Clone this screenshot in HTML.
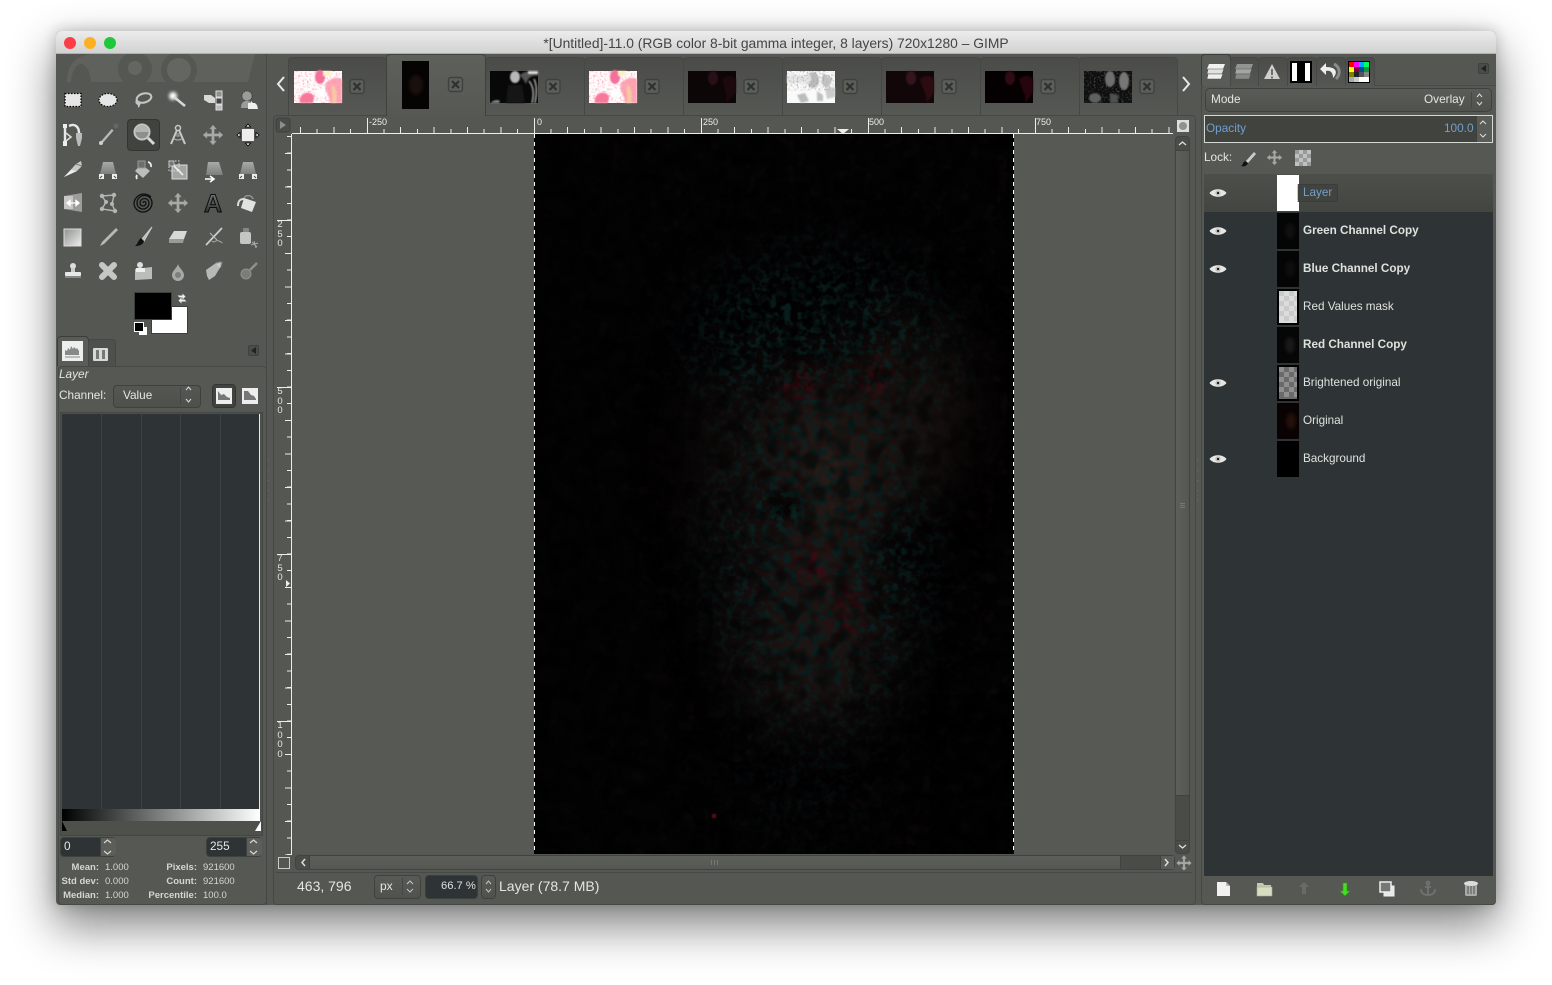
<!DOCTYPE html>
<html><head><meta charset="utf-8"><title>GIMP</title>
<style>
html,body{margin:0;padding:0;background:#fff;width:1552px;height:985px;overflow:hidden}
body{font-family:"Liberation Sans",sans-serif;color:#e4e6e1;position:relative}
.a{position:absolute;white-space:nowrap}
.t{position:absolute;white-space:nowrap;font-size:11.8px;line-height:14px}
.tab{position:absolute;top:57px;height:58px;box-sizing:border-box;border:1px solid #464845;border-bottom:0;border-radius:4px 4px 0 0;background:linear-gradient(#4b4c49,#565854)}
.rtab{position:absolute;top:57px;height:29px;box-sizing:border-box;border:1px solid #464845;border-bottom:0;border-radius:4px 4px 0 0;background:linear-gradient(#4b4c49,#555753)}
.btn{position:absolute;box-sizing:border-box;border:1px solid #3f413e;border-radius:4px;background:linear-gradient(#5f615d,#4f514d)}
.lb{position:absolute;font-size:11.7px;line-height:14px;left:1303px;color:#dfe1dc;white-space:nowrap}
.r{position:absolute;font-size:9.5px;font-weight:bold;line-height:11px;text-align:right;width:60px;color:#d3d7cf;white-space:nowrap}
.v{position:absolute;font-size:9.5px;line-height:11px;color:#d3d7cf;white-space:nowrap}
.rl{position:absolute;font-size:9px;line-height:10px;color:#eceeea;white-space:nowrap}
.vl{position:absolute;left:276px;width:8px;text-align:center;font-size:9.5px;line-height:9.5px;color:#e3e5e1;white-space:normal}
</style></head><body>

<div class="a" style="left:56px;top:31px;width:1440px;height:874px;border-radius:5px 5px 4px 4px;background:#555753;box-shadow:0 20px 46px 2px rgba(0,0,0,.48),0 0 14px rgba(0,0,0,.22)"></div>
<div class="a" style="left:56px;top:31px;width:1440px;height:23px;border-radius:5px 5px 0 0;background:linear-gradient(#ececec,#d2d2d2);border-bottom:1px solid #b0b0b0;box-sizing:border-box"></div>
<div class="a" style="left:56px;width:1440px;top:36px;text-align:center;font-size:13.85px;line-height:15px;color:#444">*[Untitled]-11.0 (RGB color 8-bit gamma integer, 8 layers) 720x1280 – GIMP</div>
<div class="a" style="left:64px;top:37px;width:12px;height:12px;border-radius:6px;background:#fc3d47"></div>
<div class="a" style="left:84px;top:37px;width:12px;height:12px;border-radius:6px;background:#fdb024"></div>
<div class="a" style="left:104px;top:37px;width:12px;height:12px;border-radius:6px;background:#1fc83a"></div>

<!-- toolbox -->
<div class="a" style="left:56px;top:54px;width:211px;height:851px;border-right:1px solid #474946;box-sizing:border-box"></div>
<div class="a" style="left:127px;top:119px;width:33px;height:32px;box-sizing:border-box;border:1px solid #333532;border-radius:4px;background:#41433f"></div>

<div class="a" style="left:151px;top:306px;width:37px;height:28px;background:#fff;box-sizing:border-box;border:1px solid #3c3e3b"></div>
<div class="a" style="left:134px;top:292px;width:38px;height:28px;background:#000;box-sizing:border-box;border:1px solid #3c3e3b"></div>
<div class="a" style="left:139px;top:327px;width:8px;height:8px;background:#fff"></div>
<div class="a" style="left:134px;top:322px;width:8px;height:8px;background:#000;border:1px solid #fff"></div>

<!-- histogram dock -->
<div class="a" style="left:57px;top:336px;width:32px;height:30px;box-sizing:border-box;border:1px solid #3c3e3b;border-bottom:0;border-radius:4px 4px 0 0;background:#5a5c58"></div>
<div class="a" style="left:88px;top:339px;width:28px;height:27px;box-sizing:border-box;border:1px solid #464845;border-bottom:0;border-radius:4px 4px 0 0;background:#4e504c"></div>
<div class="a" style="left:58px;top:366px;width:209px;height:539px;box-sizing:border-box;border:1px solid #464845;border-radius:4px;background:#565854"></div>
<div class="btn" style="left:248px;top:345px;width:11px;height:11px;border-radius:2px;background:#4a4c48"></div>
<div class="t" style="left:59px;top:367px;font-style:italic;color:#e4e6e1">Layer</div>
<div class="t" style="left:59px;top:388px;color:#e4e6e1">Channel:</div>
<div class="btn" style="left:113px;top:385px;width:88px;height:23px;background:linear-gradient(#555753,#4e504c)"></div>
<div class="t" style="left:123px;top:388px;color:#e4e6e1">Value</div>
<div class="a" style="left:180px;top:388px;width:1px;height:17px;background:#444643"></div>
<div class="btn" style="left:212px;top:384px;width:24px;height:24px;border-color:#333532;background:#41433f"></div>
<div class="a" style="left:60px;top:412px;width:203px;height:424px;box-sizing:border-box;border:1px solid #444643;background:#4e504c"></div>
<div class="a" style="left:62px;top:414px;width:198px;height:395px;background:#2e3436"></div>
<div class="a" style="left:101px;top:414px;width:1px;height:395px;background:#3c4244"></div>
<div class="a" style="left:141px;top:414px;width:1px;height:395px;background:#3c4244"></div>
<div class="a" style="left:180px;top:414px;width:1px;height:395px;background:#3c4244"></div>
<div class="a" style="left:220px;top:414px;width:1px;height:395px;background:#3c4244"></div>
<div class="a" style="left:259px;top:414px;width:1px;height:395px;background:#e8e8e8"></div>
<div class="a" style="left:62px;top:809px;width:198px;height:12px;background:linear-gradient(90deg,#000,#fff)"></div>

<div class="btn" style="left:60px;top:837px;width:56px;height:20px;background:#2e3436"></div>
<div class="a" style="left:100px;top:838px;width:15px;height:18px;background:#5c5e5a;border-left:1px solid #3f413e;border-radius:0 3px 3px 0"></div>
<div class="t" style="left:64px;top:839px;color:#e4e6e1">0</div>
<div class="btn" style="left:206px;top:837px;width:56px;height:20px;background:#2e3436"></div>
<div class="a" style="left:246px;top:838px;width:15px;height:18px;background:#5c5e5a;border-left:1px solid #3f413e;border-radius:0 3px 3px 0"></div>
<div class="t" style="left:210px;top:839px;color:#e4e6e1">255</div>

<div class="r" style="left:39px;top:862px">Mean:</div><div class="v" style="left:105px;top:862px">1.000</div>
<div class="r" style="left:39px;top:876px">Std dev:</div><div class="v" style="left:105px;top:876px">0.000</div>
<div class="r" style="left:39px;top:890px">Median:</div><div class="v" style="left:105px;top:890px">1.000</div>
<div class="r" style="left:137px;top:862px">Pixels:</div><div class="v" style="left:203px;top:862px">921600</div>
<div class="r" style="left:137px;top:876px">Count:</div><div class="v" style="left:203px;top:876px">921600</div>
<div class="r" style="left:137px;top:890px">Percentile:</div><div class="v" style="left:203px;top:890px">100.0</div>

<!-- center tabs -->
<div class="tab" style="left:288px;width:99px"></div>
<div class="tab" style="left:485px;width:100px"></div>
<div class="tab" style="left:584px;width:100px"></div>
<div class="tab" style="left:683px;width:100px"></div>
<div class="tab" style="left:782px;width:100px"></div>
<div class="tab" style="left:881px;width:100px"></div>
<div class="tab" style="left:980px;width:100px"></div>
<div class="tab" style="left:1079px;width:99px"></div>
<div class="a" style="left:273px;top:115px;width:923px;height:790px;box-sizing:border-box;border:1px solid #464845;border-radius:4px;background:#555753"></div>
<div class="tab" style="left:386px;top:54px;width:100px;height:62px;border-color:#3f413d;background:linear-gradient(#5e605c,#565854);border-bottom:0"></div>

<!-- canvas -->
<div class="a" style="left:292px;top:134px;width:882px;height:720px;background:#575955"></div>
<svg class="a" style="left:534px;top:134px" width="480" height="720" viewBox="0 0 480 720">
<defs>
<filter id="blur30" color-interpolation-filters="sRGB" x="-60%" y="-60%" width="220%" height="220%"><feGaussianBlur stdDeviation="30"/></filter>
<filter id="blur14" color-interpolation-filters="sRGB" x="-60%" y="-60%" width="220%" height="220%"><feGaussianBlur stdDeviation="10"/></filter>
<filter id="nT" color-interpolation-filters="sRGB" x="0" y="0" width="100%" height="100%"><feTurbulence type="fractalNoise" baseFrequency="0.14" numOctaves="2" seed="4"/><feColorMatrix values="0 0 0 0 .035  0 0 0 0 .125  0 0 0 0 .12  3 3 0 0 -2.75"/></filter>
<filter id="nR" color-interpolation-filters="sRGB" x="0" y="0" width="100%" height="100%"><feTurbulence type="fractalNoise" baseFrequency="0.12" numOctaves="2" seed="9"/><feColorMatrix values="0 0 0 0 .26  0 0 0 0 .03  0 0 0 0 .06  3 0 3 0 -2.7"/></filter>
<filter id="nK" color-interpolation-filters="sRGB" x="0" y="0" width="100%" height="100%"><feTurbulence type="fractalNoise" baseFrequency="0.06" numOctaves="2" seed="2"/><feColorMatrix values="0 0 0 0 0  0 0 0 0 0  0 0 0 0 0  0 2.4 2.4 0 -2.1"/></filter>
<filter id="nB" color-interpolation-filters="sRGB" x="0" y="0" width="100%" height="100%"><feTurbulence type="fractalNoise" baseFrequency="0.08" numOctaves="2" seed="14"/><feColorMatrix values="0 0 0 0 .07  0 0 0 0 .05  0 0 0 0 .055  2 2 0 0 -2.05"/></filter>
<linearGradient id="lr"><stop offset="0" stop-color="#222"/><stop offset=".3" stop-color="#555"/><stop offset="1" stop-color="#777"/></linearGradient>
<mask id="mC"><rect width="480" height="720" fill="#000"/><g filter="url(#blur30)"><ellipse cx="285" cy="420" rx="105" ry="170" fill="#fff"/><ellipse cx="290" cy="210" rx="130" ry="90" fill="#eee"/><ellipse cx="270" cy="640" rx="80" ry="70" fill="#444"/></g></mask>
<mask id="mR"><rect width="480" height="720" fill="#000"/><g filter="url(#blur14)" fill="#fff"><ellipse cx="266" cy="249" rx="22" ry="16"/><ellipse cx="339" cy="244" rx="22" ry="16"/><ellipse cx="279" cy="433" rx="16" ry="22"/><ellipse cx="313" cy="476" rx="14" ry="26"/></g></mask>
<mask id="mO"><rect width="480" height="720" fill="url(#lr)"/></mask>
</defs>
<rect width="480" height="720" fill="#040304"/>
<rect width="480" height="720" filter="url(#nB)" mask="url(#mO)"/>
<g filter="url(#blur30)">
<ellipse cx="280" cy="335" rx="90" ry="85" fill="#2a1c19"/>
<ellipse cx="280" cy="490" rx="75" ry="100" fill="#1e1413"/>
<ellipse cx="370" cy="270" rx="60" ry="85" fill="#19110f"/>
<ellipse cx="210" cy="330" rx="45" ry="100" fill="#120c0c"/>
</g>
<ellipse cx="253" cy="372" rx="20" ry="13" fill="#020101" filter="url(#blur14)"/>
<ellipse cx="390" cy="420" rx="40" ry="14" fill="#050303" filter="url(#blur14)"/>
<rect width="480" height="720" filter="url(#nT)" mask="url(#mC)"/>
<rect width="480" height="720" filter="url(#nR)" mask="url(#mR)"/>
<rect width="480" height="720" filter="url(#nK)" opacity=".5"/>
<rect x="395" y="560" width="85" height="160" fill="#000" opacity=".3"/>
<circle cx="180" cy="682" r="2.500" fill="#4a0a10"/>
<line x1=".5" y1="0" x2=".5" y2="720" stroke="#000" stroke-width="1"/>
<line x1=".5" y1="0" x2=".5" y2="720" stroke="#fff" stroke-width="1" stroke-dasharray="4 4"/>
<line x1="479.5" y1="0" x2="479.5" y2="720" stroke="#000" stroke-width="1"/>
<line x1="479.5" y1="0" x2="479.5" y2="720" stroke="#fff" stroke-width="1" stroke-dasharray="4 4"/>
</svg>

<!-- ruler labels -->
<div class="rl" style="left:369px;top:117px">-250</div>
<div class="rl" style="left:537px;top:117px">0</div>
<div class="rl" style="left:703px;top:117px">250</div>
<div class="rl" style="left:869px;top:117px">500</div>
<div class="rl" style="left:1036px;top:117px">750</div>
<div class="vl" style="top:220px">2<br>5<br>0</div>
<div class="vl" style="top:387px">5<br>0<br>0</div>
<div class="vl" style="top:554px">7<br>5<br>0</div>
<div class="vl" style="top:721px">1<br>0<br>0<br>0</div>

<!-- scrollbars -->
<div class="a" style="left:1175px;top:136px;width:15px;height:718px;box-sizing:border-box;border:1px solid #414340;border-radius:4px;background:#4a4c48"></div>
<div class="a" style="left:1176px;top:150px;width:13px;height:646px;background:linear-gradient(90deg,#5d5f5b,#555753);border-top:1px solid #414340;border-bottom:1px solid #414340;box-sizing:border-box"></div>
<div class="a" style="left:1176px;top:840px;width:13px;height:1px;background:#414340"></div>
<div class="a" style="left:295px;top:855px;width:880px;height:15px;box-sizing:border-box;border:1px solid #414340;border-radius:4px;background:#4a4c48"></div>
<div class="a" style="left:309px;top:856px;width:812px;height:13px;background:linear-gradient(#5d5f5b,#555753);border-left:1px solid #414340;border-right:1px solid #414340;box-sizing:border-box"></div>
<div class="a" style="left:1160px;top:856px;width:14px;height:13px;background:#5a5c58;border-left:1px solid #414340;box-sizing:border-box"></div>
<div class="a" style="left:278px;top:857px;width:12px;height:12px;box-sizing:border-box;border:1px solid #c9cbc6"></div>

<!-- status bar -->
<div class="a" style="left:276px;top:872px;width:916px;height:1px;background:#474946"></div>
<div class="a" style="left:297px;top:878px;font-size:14px;line-height:16px;color:#e4e6e1">463, 796</div>
<div class="btn" style="left:374px;top:875px;width:47px;height:24px;background:linear-gradient(#585a56,#50524e)"></div>
<div class="a" style="left:380px;top:879px;font-size:12px;line-height:14px">px</div>
<div class="a" style="left:402px;top:878px;width:1px;height:17px;background:#444643"></div>
<div class="a" style="left:425px;top:875px;width:53px;height:24px;background:#2e3436;border-radius:4px;border:1px solid #3a3f40;box-sizing:border-box"></div>
<div class="a" style="left:441px;top:879px;font-size:11.2px;line-height:14px;color:#dfe1dc">66.7 %</div>
<div class="btn" style="left:481px;top:875px;width:15px;height:24px;background:linear-gradient(#585a56,#50524e)"></div>
<div class="a" style="left:499px;top:878px;font-size:14px;line-height:16px;color:#e4e6e1">Layer (78.7 MB)</div>

<!-- right dock -->
<div class="a" style="left:1201px;top:85px;width:295px;height:820px;box-sizing:border-box;border:1px solid #464845;border-top-color:#4a4c48;border-right:0;border-radius:4px 0 4px 4px;background:#565854"></div>
<div class="rtab" style="left:1201px;top:54px;width:30px;height:32px;border-color:#3c3e3b;background:#5a5c58"></div>
<div class="rtab" style="left:1230px;width:29px"></div>
<div class="rtab" style="left:1258px;width:30px"></div>
<div class="rtab" style="left:1287px;width:30px"></div>
<div class="rtab" style="left:1316px;width:30px"></div>
<div class="rtab" style="left:1345px;width:30px"></div>
<div class="btn" style="left:1478px;top:63px;width:11px;height:11px;border-radius:2px;background:#4a4c48"></div>
<div class="btn" style="left:1205px;top:88px;width:287px;height:24px;background:linear-gradient(#5a5c58,#50524e);border-radius:5px"></div>
<div class="t" style="left:1211px;top:92px;color:#e4e6e1">Mode</div>
<div class="t" style="left:1424px;top:92px;color:#e4e6e1">Overlay</div>
<div class="a" style="left:1471px;top:92px;width:1px;height:16px;background:#444643"></div>
<div class="a" style="left:1204px;top:115px;width:289px;height:28px;box-sizing:border-box;border:1px solid #d6d8d3;background:#41433f"></div>
<div class="a" style="left:1476px;top:116px;width:16px;height:26px;background:#5a5c58;box-sizing:border-box;border-left:1px solid #3f413e"></div>
<div class="t" style="left:1206px;top:121px;color:#729fcf">Opacity</div>
<div class="t" style="left:1444px;top:121px;color:#729fcf">100.0</div>
<div class="t" style="left:1204px;top:150px;color:#e4e6e1">Lock:</div>

<div class="a" style="left:1204px;top:174px;width:289px;height:702px;background:#2e3436"></div>
<div class="a" style="left:1204px;top:174px;width:289px;height:38px;background:linear-gradient(#4d4f4b,#434541)"></div>
<div class="a" style="left:1277px;top:175px;width:22px;height:36px;background:#fff"></div>
<div class="a" style="left:1297px;top:184px;width:41px;height:18px;box-sizing:border-box;border:1px solid #3b3d3a;border-left-color:#ccc;border-radius:2px;background:#41433f"></div>
<div class="lb" style="top:186px;color:#729fcf">Layer</div>
<div class="lb" style="top:224px;font-weight:bold">Green Channel Copy</div>
<div class="lb" style="top:262px;font-weight:bold">Blue Channel Copy</div>
<div class="lb" style="top:300px">Red Values mask</div>
<div class="lb" style="top:338px;font-weight:bold">Red Channel Copy</div>
<div class="lb" style="top:376px">Brightened original</div>
<div class="lb" style="top:414px">Original</div>
<div class="lb" style="top:452px">Background</div>

<!-- icon overlay -->
<svg class="a" style="left:0;top:0;pointer-events:none" width="1552" height="985" viewBox="0 0 1552 985">
<defs>
<filter id="b1" color-interpolation-filters="sRGB" x="-30%" y="-30%" width="160%" height="160%"><feGaussianBlur stdDeviation="1.6"/></filter>
<filter id="b05" color-interpolation-filters="sRGB" x="-30%" y="-30%" width="160%" height="160%"><feGaussianBlur stdDeviation=".7"/></filter>
<filter id="spk" color-interpolation-filters="sRGB" x="0" y="0" width="100%" height="100%"><feTurbulence type="fractalNoise" baseFrequency="0.45" numOctaves="2" seed="5"/><feColorMatrix values="0 0 0 0 1  0 0 0 0 .7  0 0 0 0 .76  2 2 0 0 -1.9"/></filter>
<filter id="spg" color-interpolation-filters="sRGB" x="0" y="0" width="100%" height="100%"><feTurbulence type="fractalNoise" baseFrequency="0.5" numOctaves="2" seed="7"/><feColorMatrix values="0 0 0 0 .55  0 0 0 0 .55  0 0 0 0 .55  3 3 0 0 -3"/></filter>
<linearGradient id="gg" x1="0" y1="0" x2="1" y2="1"><stop offset="0" stop-color="#8f918d"/><stop offset="1" stop-color="#eee"/></linearGradient>
<linearGradient id="gv" x1="0" y1="0" x2="0" y2="1"><stop offset="0" stop-color="#a9aaa7"/><stop offset="1" stop-color="#7d7f7b"/></linearGradient>
<linearGradient id="ga" x1="0" y1="0" x2="0" y2="1"><stop offset="0" stop-color="#8a8a8a"/><stop offset="1" stop-color="#1c1c1c"/></linearGradient>
<g id="arrows4"><path d="M0-10l3.500 4H1.300V-1.300H6V-3.500l4 3.500-4 3.500V1.300H1.300V6H3.500L0 10l-3.500-4H-1.300V1.300H-6V3.500l-4-3.500 4-3.500V-1.300H-1.300V-6H-3.500z" fill="#a8aaa6" stroke="#8a8c88" stroke-width=".5"/></g>
<g id="persp"><path d="M-5-8H5L8 4H-8z" fill="url(#gv)"/><rect x="-9" y="4" width="5" height="5" fill="#eee"/><rect x="4" y="4" width="5" height="5" fill="#eee"/><path d="M-8 8l2-2M8 8l-2-2" stroke="#444"/></g>
<g id="close"><rect x="-7" y="-7" width="14" height="14" rx="2.500" fill="#5c5e5a" stroke="#3f413e" stroke-width="1.400"/><path d="M-3.500-3.500l7 7M3.500-3.500l-7 7" stroke="#2f312e" stroke-width="2.200"/></g>
<g id="eye"><path d="M-8.500 0C-5-5 5-5 8.500 0 5 5-5 5-8.500 0z" fill="#e6e6e4"/><circle r="2.700" fill="#bdbdbb"/><circle r="1.100" fill="#111"/></g>
<g id="pink"><rect width="48" height="32" fill="#fff"/><rect width="48" height="32" filter="url(#spk)"/><g filter="url(#b05)"><ellipse cx="26" cy="6" rx="5" ry="7" fill="#f2709a"/><path d="M32 12c6-6 12-6 16-4v24H36c0-8-6-10-4-20z" fill="#fb90a2" opacity=".8"/><path d="M38 14c4 2 6 8 4 18h-4c1-8-1-12 0-18z" fill="#f8c8a0"/><path d="M6 32c-2-6 4-12 10-10s4 8 2 10z" fill="#f8789a"/><path d="M22 18h9v8h-9z" fill="#fff"/><path d="M29 0h8v5h-8z" fill="#ffefc8"/></g></g>
<g id="mono"><rect width="48" height="32" fill="#080808"/><g filter="url(#b05)"><ellipse cx="25" cy="6" rx="5" ry="6" fill="#b8b8b8"/><path d="M18 14h14l3 18H16z" fill="#161616"/><path d="M30 4c6-5 14-4 18-4v5c-7-1-10 2-12 8-2-4-4-6-6-9z" fill="#555"/><path d="M0 32c4-3 7-4 10-2l-1 2z" fill="#888"/><path d="M39 10c5 6 5 14 3 22M44 8c3 6 3 14 1 24" stroke="#aaa" stroke-width="1.500" fill="none"/><rect x="38" y="0" width="10" height="3" fill="#ddd"/></g></g>
<g id="dark"><rect width="48" height="32" fill="#0c0607"/><g filter="url(#b05)"><ellipse cx="25" cy="7" rx="5" ry="7" fill="#27101a"/><path d="M34 8c6-5 12-3 14 0v14l-10 10c2-8-2-14-4-24z" fill="#1c090c"/></g></g>
<g id="light"><rect width="48" height="32" fill="#fafafa"/><g filter="url(#b05)"><ellipse cx="26" cy="9" rx="6" ry="8" fill="#bcbcbc"/><path d="M36 2l10 6-6 10-6-6z" fill="#c4c4c4"/><path d="M14 32l-4-8 8-2 4 8z" fill="#bcbcbc"/><path d="M0 4h24v8H0z" fill="#e6e6e6"/><path d="M38 18l10-2v10l-8 2z" fill="#ccc"/><path d="M30 20l6 4v6h-6z" fill="#c0c0c0"/></g><rect width="48" height="20" filter="url(#spg)" opacity=".5"/></g>
<g id="check"><rect width="48" height="32" fill="#0e0e0e"/><rect width="48" height="32" filter="url(#spg)" opacity=".35"/><g filter="url(#b05)"><ellipse cx="26" cy="8" rx="5" ry="8" fill="#6f6f6f"/><ellipse cx="40" cy="10" rx="5" ry="9" fill="#777"/><ellipse cx="11" cy="27" rx="6" ry="5" fill="#606060"/><path d="M26 22l8 2v8h-8z" fill="#505050"/></g></g>
</defs>

<!-- wilber ghost -->
<svg x="56" y="54" width="205" height="28" viewBox="56 54 205 28">
<path d="M67 82C67 62 78 54 96 54H255L248 82z" fill="#5f615d"/>
<ellipse cx="81" cy="84" rx="10" ry="20" fill="#555753"/>
<circle cx="135" cy="69" r="17" fill="#555753"/><circle cx="135" cy="68" r="7" fill="#646662"/>
<circle cx="179" cy="70" r="18" fill="#555753"/><circle cx="179" cy="70" r="12" fill="#646662"/>
</svg>

<!-- row1 -->
<g transform="translate(73,100)"><rect x="-8" y="-6.500" width="16" height="13" fill="#e6e6e6"/><rect x="-8" y="-6.500" width="16" height="13" fill="none" stroke="#000" stroke-width="1.300" stroke-dasharray="1.500 1.500"/></g>
<g transform="translate(108,100)"><ellipse rx="9" ry="6.500" fill="#e6e6e6"/><ellipse rx="9" ry="6.500" fill="none" stroke="#000" stroke-width="1.200" stroke-dasharray="1.500 1.500"/></g>
<g transform="translate(143,100)" fill="none" stroke="#c6c7c4" stroke-width="2"><ellipse cx="1" cy="-2" rx="7.500" ry="4.500" transform="rotate(-15 1 -2)"/><path d="M-6 0C-8 4-4 5-3 3S-5 6-4 7"/></g>
<g transform="translate(178,100)"><circle cx="-5" cy="-4" r="4" fill="#fff" filter="url(#b1)"/><path d="M-4-3L7 6" stroke="#d8d8d6" stroke-width="2.500"/></g>
<g transform="translate(213,100)"><path d="M-9-5h7l4 3v5h-6l-5-3z" fill="#d8d8d6"/><rect x="3" y="-9" width="6" height="6" fill="#8f918d" stroke="#ddd"/><rect x="3" y="-2" width="6" height="6" fill="#444" stroke="#ddd"/><rect x="3" y="5" width="6" height="5" fill="#bbb" stroke="#ddd"/></g>
<g transform="translate(248,100)"><circle cx="-1" cy="-4" r="5" fill="#9a9c98" stroke="#222" stroke-width=".7" stroke-dasharray="1 1"/><path d="M-7 8c0-6 3-7 6-7s5 1 5 3v4z" fill="#9a9c98"/><path d="M0 9V3h3V1l2 2h2l2 2 1 4z" fill="#eee"/></g>
<!-- row2 -->
<g transform="translate(73,135)"><path d="M-8 10V-10M-4-9C2-12 6-8 6-2" fill="none" stroke="#e8e8e8" stroke-width="2.400"/><rect x="-10" y="-11" width="4" height="4" fill="#eee"/><rect x="-10" y="6" width="4" height="5" fill="#eee"/><path d="M3-2h6v5L7 11H5L3 3z" fill="#bbb"/><path d="M-7-2L-2 2 -7 6" fill="none" stroke="#ddd" stroke-width="1.600"/></g>
<g transform="translate(108,135)"><path d="M8-9L-6 7" stroke="#b8b8b6" stroke-width="2.400"/><path d="M4-8L8-4" stroke="#555" stroke-width="3"/><circle cx="-7" cy="8" r="2" fill="#d0d0ce"/><circle cx="8" cy="-9" r="2.500" fill="#666"/></g>
<g transform="translate(143,134)"><circle cx="-1" cy="-2" r="7.500" fill="#8d8f8b" stroke="#c5c6c3" stroke-width="2"/><path d="M-8-2a7 7 0 0 1 14 0z" fill="#b4b5b2"/><path d="M5 4l6 6" stroke="#d8d8d6" stroke-width="3"/></g>
<g transform="translate(178,135)"><circle cy="-7" r="2.500" fill="none" stroke="#c9cac7" stroke-width="1.500"/><path d="M-1-5L-7 9M1-5L7 9" stroke="#c9cac7" stroke-width="2" fill="none"/><path d="M-5 3q5 4 10 0" stroke="#bbb" fill="none"/><circle cy="0" r="2" fill="#8a8c88"/></g>
<use href="#arrows4" transform="translate(213,135)"/>
<g transform="translate(248,135)"><rect x="-6" y="-6" width="12" height="12" fill="#eee"/><path d="M0-11l2.500 3h-5zM0 11l2.500-3h-5zM-11 0l3 2.500v-5zM11 0l-3 2.500v-5z" fill="#fff" stroke="#000" stroke-width=".8"/></g>
<!-- row3 -->
<g transform="translate(73,169)"><path d="M-9 8L3-5 8-8 9-3 4 2z" fill="#c9cac7"/><path d="M-9 8L-2 1 4 2z" fill="#eee"/><path d="M3-5l6 2" stroke="#777"/></g>
<use href="#persp" transform="translate(108,170)"/>
<g transform="translate(143,170)"><path d="M-2-6L7 1 0 8-8 1z" fill="#bdbebb"/><rect x="-5" y="-9" width="7" height="7" fill="#6d6f6b" stroke="#999"/><path d="M5-8a4 4 0 0 1 3 5M-6 5a4 4 0 0 0 0 4" stroke="#eee" stroke-width="1.800" fill="none"/></g>
<g transform="translate(178,170)"><rect x="-6" y="-5" width="15" height="14" fill="#a5a6a3" stroke="#ddd"/><rect x="-9" y="-9" width="10" height="10" fill="none" stroke="#ddd" stroke-dasharray="1.500 1.500"/><path d="M-7-7L5 5" stroke="#eee" stroke-width="1.600"/><rect x="-9" y="-9" width="5" height="5" fill="#777" stroke="#ddd" stroke-width=".7"/></g>
<g transform="translate(213,170)"><path d="M-5-8H6L10 5H-7z" fill="url(#gv)"/><path d="M-8 9h8M-3 6l4 3-4 3" stroke="#fff" stroke-width="1.600" fill="none"/></g>
<use href="#persp" transform="translate(248,170)"/>
<!-- row4 -->
<g transform="translate(73,203)"><path d="M-9-7L9-10V9L-9 6z" fill="#9d9e9b"/><path d="M-9-7H0V6H-9z" fill="#c7c8c5"/><path d="M-6 0H6M-6 0L-3-2.500V2.500zM6 0L3-2.500V2.500z" stroke="#fff" stroke-width="1.300" fill="#fff"/></g>
<g transform="translate(108,203)" stroke="#b5b6b3" fill="none"><path d="M-6-7L6-8 4 1 7 8-6 6-2-1z" stroke-width="1.400"/><g fill="#b5b6b3" stroke="none"><circle cx="-6" cy="-7" r="2.200"/><circle cx="6" cy="-8" r="2.200"/><circle cx="4" cy="1" r="2"/><circle cx="7" cy="8" r="2.200"/><circle cx="-6" cy="6" r="2.200"/><circle cx="-2" cy="-1" r="2"/></g></g>
<path transform="translate(143,203)" d="M0 0a1.500 1.500 0 0 1 3 0a3 3 0 0 1-6 0a4.500 4.500 0 0 1 9 0a6 6 0 0 1-12 0a7.500 7.500 0 0 1 15 0a9 9 0 0 1-18 0a10 10 0 0 1 17-6" fill="none" stroke="#111" stroke-width="1.300"/>
<use href="#arrows4" transform="translate(178,203)"/>
<text x="213" y="212" text-anchor="middle" font-family="Liberation Sans,sans-serif" font-weight="bold" font-size="25" fill="url(#ga)" stroke="#0c0c0c" stroke-width="1">A</text>
<g transform="translate(248,203)"><path d="M-4-5L8-1 4 9-7 5z" fill="#e2e2e0"/><path d="M-4-5a5 5 0 0 1 9 1" fill="none" stroke="#999" stroke-width="1.300"/><path d="M-4-4C-9-4-10-1-10 3" stroke="#ddd" stroke-width="2" fill="none"/></g>
<!-- row5 -->
<rect x="64" y="229" width="17" height="17" fill="url(#gg)" stroke="#ddd"/>
<g transform="translate(108,237)"><path d="M8-9L-6 5-8 9-4 7 10-7z" fill="#b8b9b6"/></g>
<g transform="translate(143,237)"><path d="M9-10L-1 2 1 4z" fill="#bbb" stroke="#ccc"/><path d="M-2 1l3 3c-1 4-5 5-9 5 3-2 3-6 6-8z" fill="#111"/></g>
<g transform="translate(178,237)"><path d="M-9 2L-4-6H9L6 2z" fill="#d8d8d6"/><path d="M-9 2H6L5 6H-9z" fill="#9a9b98"/></g>
<g transform="translate(213,237)"><path d="M9-9L-7 8" stroke="#cfd0cd" stroke-width="1.700"/><path d="M-3-4L4 3" stroke="#bbb" stroke-width="1"/><path d="M-1 4c3 3 3-2 7 0s3 2 3 2" stroke="#aaa" fill="none"/></g>
<g transform="translate(248,237)"><rect x="-8" y="-5" width="11" height="12" rx="2" fill="#c5c6c3"/><rect x="-5" y="-9" width="6" height="4" rx="1" fill="#888"/><path d="M3 8l7-2M6 4l2 7M4 5l5 5" stroke="#aaa" fill="none"/></g>
<!-- row6 -->
<g transform="translate(73,271)"><circle cy="-5" r="3" fill="#ddd"/><rect x="-2" y="-3" width="4" height="4" fill="#ccc"/><rect x="-8" y="1" width="16" height="4" rx="1" fill="#e8e8e8"/><rect x="-8" y="5" width="16" height="2" fill="#888"/></g>
<g transform="translate(108,271)" stroke="#c6c7c4" stroke-width="6" stroke-linecap="round"><path d="M-6-6L6 6M6-6L-6 6"/></g>
<g transform="translate(143,271)"><path d="M-8-2L9-4V8L-8 9z" fill="#bcbdba"/><circle cx="-3" cy="-6" r="3" fill="#ddd"/><rect x="-7" y="-3" width="9" height="4" fill="#eee"/></g>
<g transform="translate(178,272)"><path d="M0-8C1-4 6-1 6 3A6 6 0 0 1-6 3C-6-1-1-4 0-8z" fill="#a8a9a6"/><circle cy="3" r="3" fill="#7d7f7b"/></g>
<g transform="translate(213,271)"><path d="M-7-1L3-8 8-5 2 5-4 9-6 5z" fill="#b8b9b6"/><path d="M3-8L9-9 7-3z" fill="#d4d4d2" filter="url(#b05)"/></g>
<g transform="translate(248,271)"><circle cx="-2" cy="3" r="5" fill="#7b7d79" stroke="#8f918d"/><path d="M2-1L9-8" stroke="#8f918d" stroke-width="2.500"/></g>
<!-- swap + default -->
<path d="M178 295l5 0 0-2 3 3-3 3 0-2-3 0zM187 301l-5 0 0 2-3-3 3-3 0 2 3 0z" fill="#eee" transform="translate(-.5,.5)"/>

<!-- histogram tab icons -->
<rect x="62" y="341" width="21" height="20" fill="#eee"/>
<path d="M65 355V350l2 1 1-3 2 2 1-4 2 3 1-2 2 2 1-1 2 3v4z" fill="#888"/><path d="M65 357h15" stroke="#888"/>
<rect x="93" y="348" width="15" height="13" rx="1" fill="#d8d8d6"/><rect x="96" y="350" width="3" height="9" fill="#777"/><rect x="102" y="350" width="3" height="9" fill="#777"/>
<path d="M256 347v7l-5-3.500z" fill="#222"/>
<path d="M186 390l2.500-3 2.500 3M186 399l2.500 3 2.500-3" fill="none" stroke="#ddd"/>
<g><rect x="216" y="388" width="16" height="16" fill="#eee"/><path d="M218 400v-9l3 4 3-1 3 3 3 1v2z" fill="#777"/><rect x="242" y="388" width="16" height="16" fill="#eee"/><path d="M244 400v-9h4l3 4 3 1 2 3v1z" fill="#777"/></g>
<path d="M62 821v10h5z" fill="#000"/><path d="M255 831h6v-10z" fill="#fff"/>
<path d="M104 843l3.500-3 3.500 3M104 851l3.500 3 3.500-3" fill="none" stroke="#d8d8d6" stroke-width="1.200"/>
<path d="M250 843l3.500-3 3.500 3M250 851l3.500 3 3.500-3" fill="none" stroke="#d8d8d6" stroke-width="1.200"/>

<!-- tab arrows -->
<path d="M284 77l-6 7 6 7" fill="none" stroke="#e8e8e8" stroke-width="2"/>
<path d="M1183 77l6 7-6 7" fill="none" stroke="#e8e8e8" stroke-width="2"/>

<!-- thumbnails -->
<use href="#pink" x="294" y="71"/>
<rect x="402" y="61" width="27" height="48" fill="#060303"/><ellipse cx="416" cy="85" rx="7" ry="10" fill="#1a100e" filter="url(#b1)"/>
<use href="#mono" x="490" y="71"/>
<use href="#pink" x="589" y="71"/>
<use href="#dark" x="688" y="71"/>
<use href="#light" x="787" y="71"/>
<g transform="translate(886,71)"><rect width="48" height="32" fill="#110708"/><ellipse cx="25" cy="7" rx="5" ry="7" fill="#351420" filter="url(#b05)"/><path d="M34 8c6-5 12-3 14 0v14l-8 10c2-8-4-14-6-24z" fill="#2c0c11" filter="url(#b05)"/></g>
<g transform="translate(985,71)"><rect width="48" height="32" fill="#050102"/><ellipse cx="25" cy="7" rx="5" ry="7" fill="#300a15" filter="url(#b05)"/><path d="M34 8c6-5 12-3 14 0v14l-8 10c2-8-4-14-6-24z" fill="#26060c" filter="url(#b05)"/></g>
<use href="#check" x="1084" y="71"/>
<use href="#close" x="357" y="86.500"/>
<use href="#close" x="455.500" y="84.500"/>
<use href="#close" x="553" y="86.500"/>
<use href="#close" x="652" y="86.500"/>
<use href="#close" x="751" y="86.500"/>
<use href="#close" x="850" y="86.500"/>
<use href="#close" x="949" y="86.500"/>
<use href="#close" x="1048" y="86.500"/>
<use href="#close" x="1147" y="86.500"/>

<!-- rulers -->
<rect x="276" y="118" width="14" height="14" rx="2.500" fill="#4a4c48" stroke="#3f413e"/><path d="M280 121l6 4-6 4z" fill="#8c8e8a"/>
<g shape-rendering="crispEdges" fill="none" stroke="#eceeea">
<path d="M292 133.500H1173" stroke-width="1"/>
<path d="M291.500 134V855" stroke-width="1"/>
<line x1="300" y1="131" x2="1173" y2="131" stroke-width="4" stroke-dasharray="1 15.700"/>
<line x1="300" y1="130" x2="1173" y2="130" stroke-width="6" stroke-dasharray="1 32.400"/>
<line x1="367" y1="125.500" x2="1173" y2="125.500" stroke-width="15" stroke-dasharray="1 166"/>
<line x1="289" y1="136" x2="289" y2="855" stroke-width="4" stroke-dasharray="1 15.700"/>
<line x1="288" y1="153" x2="288" y2="855" stroke-width="6" stroke-dasharray="1 32.400"/>
<line x1="284" y1="220" x2="284" y2="855" stroke-width="14" stroke-dasharray="1 166"/>
</g>
<path d="M837 129h12l-6 5z" fill="#eee"/>
<path d="M286 580v7l4-3.500z" fill="#eee"/>
<!-- canvas corner -->
<rect x="1177" y="120" width="12" height="12" fill="#ddd"/><circle cx="1183" cy="126" r="4" fill="#8f918d"/>
<path d="M1179 145l3.500-3 3.500 3M1179 845l3.500 3 3.500-3" fill="none" stroke="#ddd" stroke-width="1.300"/>
<path d="M1180 503.500h5M1180 505.500h5M1180 507.500h5" stroke="#777"/>
<path d="M305 859l-3 3.500 3 3.500M1165 859l3 3.500-3 3.500" fill="none" stroke="#ddd" stroke-width="1.500"/>
<path d="M711.500 860v5M714.500 860v5M717.500 860v5" stroke="#777"/>
<use href="#arrows4" transform="translate(1184,863) scale(.75)"/>
<path d="M407 884l3-3 3 3M407 889l3 3 3-3M486 884l2.500-3 2.500 3M486 889l2.500 3 2.500-3" fill="none" stroke="#c6c7c4"/>

<!-- dock dots -->
<g fill="#6c6e6a"><rect x="268" y="460" width="1" height="1"/><rect x="268" y="470" width="1" height="1"/><rect x="268" y="480" width="1" height="1"/><rect x="268" y="490" width="1" height="1"/><rect x="268" y="500" width="1" height="1"/><rect x="1197" y="460" width="1" height="1"/><rect x="1197" y="470" width="1" height="1"/><rect x="1197" y="480" width="1" height="1"/><rect x="1197" y="490" width="1" height="1"/><rect x="1197" y="500" width="1" height="1"/></g>

<!-- right tabs -->
<g transform="translate(1216,71)"><path d="M-7-7H9L7-2H-9z" fill="#f0f0ee"/><path d="M-8-2H8L6 3H-9z" fill="#e2e2e0" stroke="#555753" stroke-width=".6"/><path d="M-8 3H7L5 8H-9z" fill="#f0f0ee" stroke="#555753" stroke-width=".6"/></g>
<g transform="translate(1244,71)"><path d="M-7-7H9L7-2H-9z" fill="#929491"/><path d="M-8-2H8L6 3H-9z" fill="#a5a6a3" stroke="#555753" stroke-width=".6"/><path d="M-8 3H7L5 8H-9z" fill="#888a86" stroke="#555753" stroke-width=".6"/></g>
<g transform="translate(1272,72)"><path d="M0-8L8 7H-8z" fill="#cfd0cd"/><path d="M0-3v6M0 4.500v2" stroke="#555" stroke-width="1.600"/></g>
<rect x="1290" y="61" width="22" height="22" fill="#000"/><rect x="1292" y="63" width="5" height="18" fill="#fff"/><rect x="1305" y="63" width="5" height="18" fill="#fff"/>
<g transform="translate(1330,71)"><path d="M-4-8L-10-2-4 4V0C0-1 3 1 3 7 8 2 7-4-4-4z" fill="#eee"/><path d="M4-7C10-4 11 3 6 8" fill="none" stroke="#8a8c88" stroke-width="3"/></g>
<g shape-rendering="crispEdges"><rect x="1348" y="61" width="22" height="22" fill="#000"/>
<rect x="1349" y="62" width="5" height="5" fill="#f00"/><rect x="1354" y="62" width="5" height="5" fill="#f0f"/><rect x="1359" y="62" width="5" height="5" fill="#0af"/><rect x="1364" y="62" width="5" height="5" fill="#0f6"/>
<rect x="1349" y="67" width="5" height="5" fill="#ff0"/><rect x="1354" y="67" width="5" height="5" fill="#800040"/><rect x="1359" y="67" width="5" height="5" fill="#005090"/><rect x="1364" y="67" width="5" height="5" fill="#00a040"/>
<rect x="1349" y="72" width="5" height="5" fill="#808000"/><rect x="1354" y="72" width="5" height="5" fill="#222"/><rect x="1359" y="72" width="5" height="5" fill="#555"/><rect x="1364" y="72" width="5" height="5" fill="#888"/>
<rect x="1349" y="77" width="5" height="5" fill="#aaa"/><rect x="1354" y="77" width="5" height="5" fill="#ccc"/><rect x="1359" y="77" width="10" height="5" fill="#fff"/></g>
<path d="M1486 65v7l-5-3.500z" fill="#222"/>
<path d="M1477 97l2.500-3 2.500 3M1477 102l2.500 3 2.500-3" fill="none" stroke="#ddd"/>
<path d="M1480 124l3-3 3 3M1480 134l3 3 3-3" fill="none" stroke="#ddd"/>
<!-- lock row -->
<g transform="translate(1247,159)"><path d="M7-7L-1 2 1 4 9-5z" fill="#ccc"/><path d="M-2 2l3 2c-1 3-4 4-7 3 2-1 2-4 4-5z" fill="#111"/></g>
<use href="#arrows4" transform="translate(1274.500,157.500) scale(.75)"/>
<g shape-rendering="crispEdges"><rect x="1295" y="150" width="16" height="16" fill="#c0c0c0"/><path d="M1295 150h4v4h-4zM1303 150h4v4h-4zM1299 154h4v4h-4zM1307 154h4v4h-4zM1295 158h4v4h-4zM1303 158h4v4h-4zM1299 162h4v4h-4zM1307 162h4v4h-4z" fill="#999"/></g>

<!-- eyes -->
<use href="#eye" x="1218" y="193"/><use href="#eye" x="1218" y="231"/><use href="#eye" x="1218" y="269"/><use href="#eye" x="1218" y="383"/><use href="#eye" x="1218" y="459"/>
<!-- layer thumbs -->
<rect x="1277" y="213" width="22" height="36" fill="#050505"/><ellipse cx="1290" cy="231" rx="5" ry="8" fill="#101010" filter="url(#b1)"/>
<rect x="1277" y="251" width="22" height="36" fill="#050505"/><ellipse cx="1290" cy="269" rx="5" ry="8" fill="#0e0e0e" filter="url(#b1)"/>
<rect x="1277" y="289" width="22" height="36" fill="#000"/><rect x="1279" y="291" width="18" height="32" fill="#dcdcdc"/>
<g shape-rendering="crispEdges" fill="#cacaca"><rect x="1279" y="291" width="5" height="5"/><rect x="1289" y="291" width="5" height="5"/><rect x="1284" y="296" width="5" height="5"/><rect x="1294" y="296" width="3" height="5"/><rect x="1279" y="301" width="5" height="5"/><rect x="1289" y="301" width="5" height="5"/><rect x="1284" y="306" width="5" height="5"/><rect x="1294" y="306" width="3" height="5"/><rect x="1279" y="311" width="5" height="5"/><rect x="1289" y="311" width="5" height="5"/><rect x="1284" y="316" width="5" height="5"/><rect x="1294" y="316" width="3" height="5"/></g>
<rect x="1277" y="327" width="22" height="36" fill="#060606"/><ellipse cx="1290" cy="345" rx="5" ry="8" fill="#191919" filter="url(#b1)"/>
<rect x="1277" y="365" width="22" height="36" fill="#000"/><rect x="1279" y="367" width="18" height="32" fill="#6a6a6a"/>
<g shape-rendering="crispEdges" fill="#8f8f8f"><rect x="1279" y="367" width="5" height="5"/><rect x="1289" y="367" width="5" height="5"/><rect x="1284" y="372" width="5" height="5"/><rect x="1294" y="372" width="3" height="5"/><rect x="1279" y="377" width="5" height="5"/><rect x="1289" y="377" width="5" height="5"/><rect x="1284" y="382" width="5" height="5"/><rect x="1294" y="382" width="3" height="5"/><rect x="1279" y="387" width="5" height="5"/><rect x="1289" y="387" width="5" height="5"/><rect x="1284" y="392" width="5" height="5"/><rect x="1294" y="392" width="3" height="5"/></g>
<rect x="1277" y="403" width="22" height="36" fill="#090303"/><ellipse cx="1291" cy="421" rx="5" ry="8" fill="#24100b" filter="url(#b1)"/>
<rect x="1277" y="441" width="22" height="36" fill="#000"/>

<!-- layer bottom icons -->
<path d="M1217 882h9l4 4v10h-13z" fill="#f2f2f0"/><path d="M1226 882v4h4z" fill="#bbb"/>
<path d="M1257 883h6l1 2h7v2h-14z" fill="#c5c8ae"/><rect x="1257" y="887" width="15" height="9" fill="#d8dcc0" stroke="#a8ab92" stroke-width=".6"/>
<path d="M1304 882l5 5h-3v7h-4v-7h-3z" fill="#696b67"/>
<path d="M1345 896l-5-5h3v-8h4v8h3z" fill="#44dd22" stroke="#2a9a12" stroke-width=".6"/>
<rect x="1384" y="886" width="10" height="10" fill="#e8e8e8" stroke="#eee"/><rect x="1380" y="882" width="11" height="10" fill="#777" stroke="#eee" stroke-width="1.500"/>
<g fill="none" stroke="#717370" stroke-width="1.800"><circle cx="1428" cy="883" r="1.500"/><path d="M1428 885v10M1425 887h6M1421 889c0 5 4 6 7 6s7-1 7-6"/></g>
<g><rect x="1465" y="883" width="12" height="13" rx="1.500" fill="#a9aaa7"/><ellipse cx="1471" cy="883.500" rx="7" ry="2.500" fill="#dcdcda"/><path d="M1468 886v8M1471 886v8M1474 886v8" stroke="#555"/></g>
</svg>
</body></html>
